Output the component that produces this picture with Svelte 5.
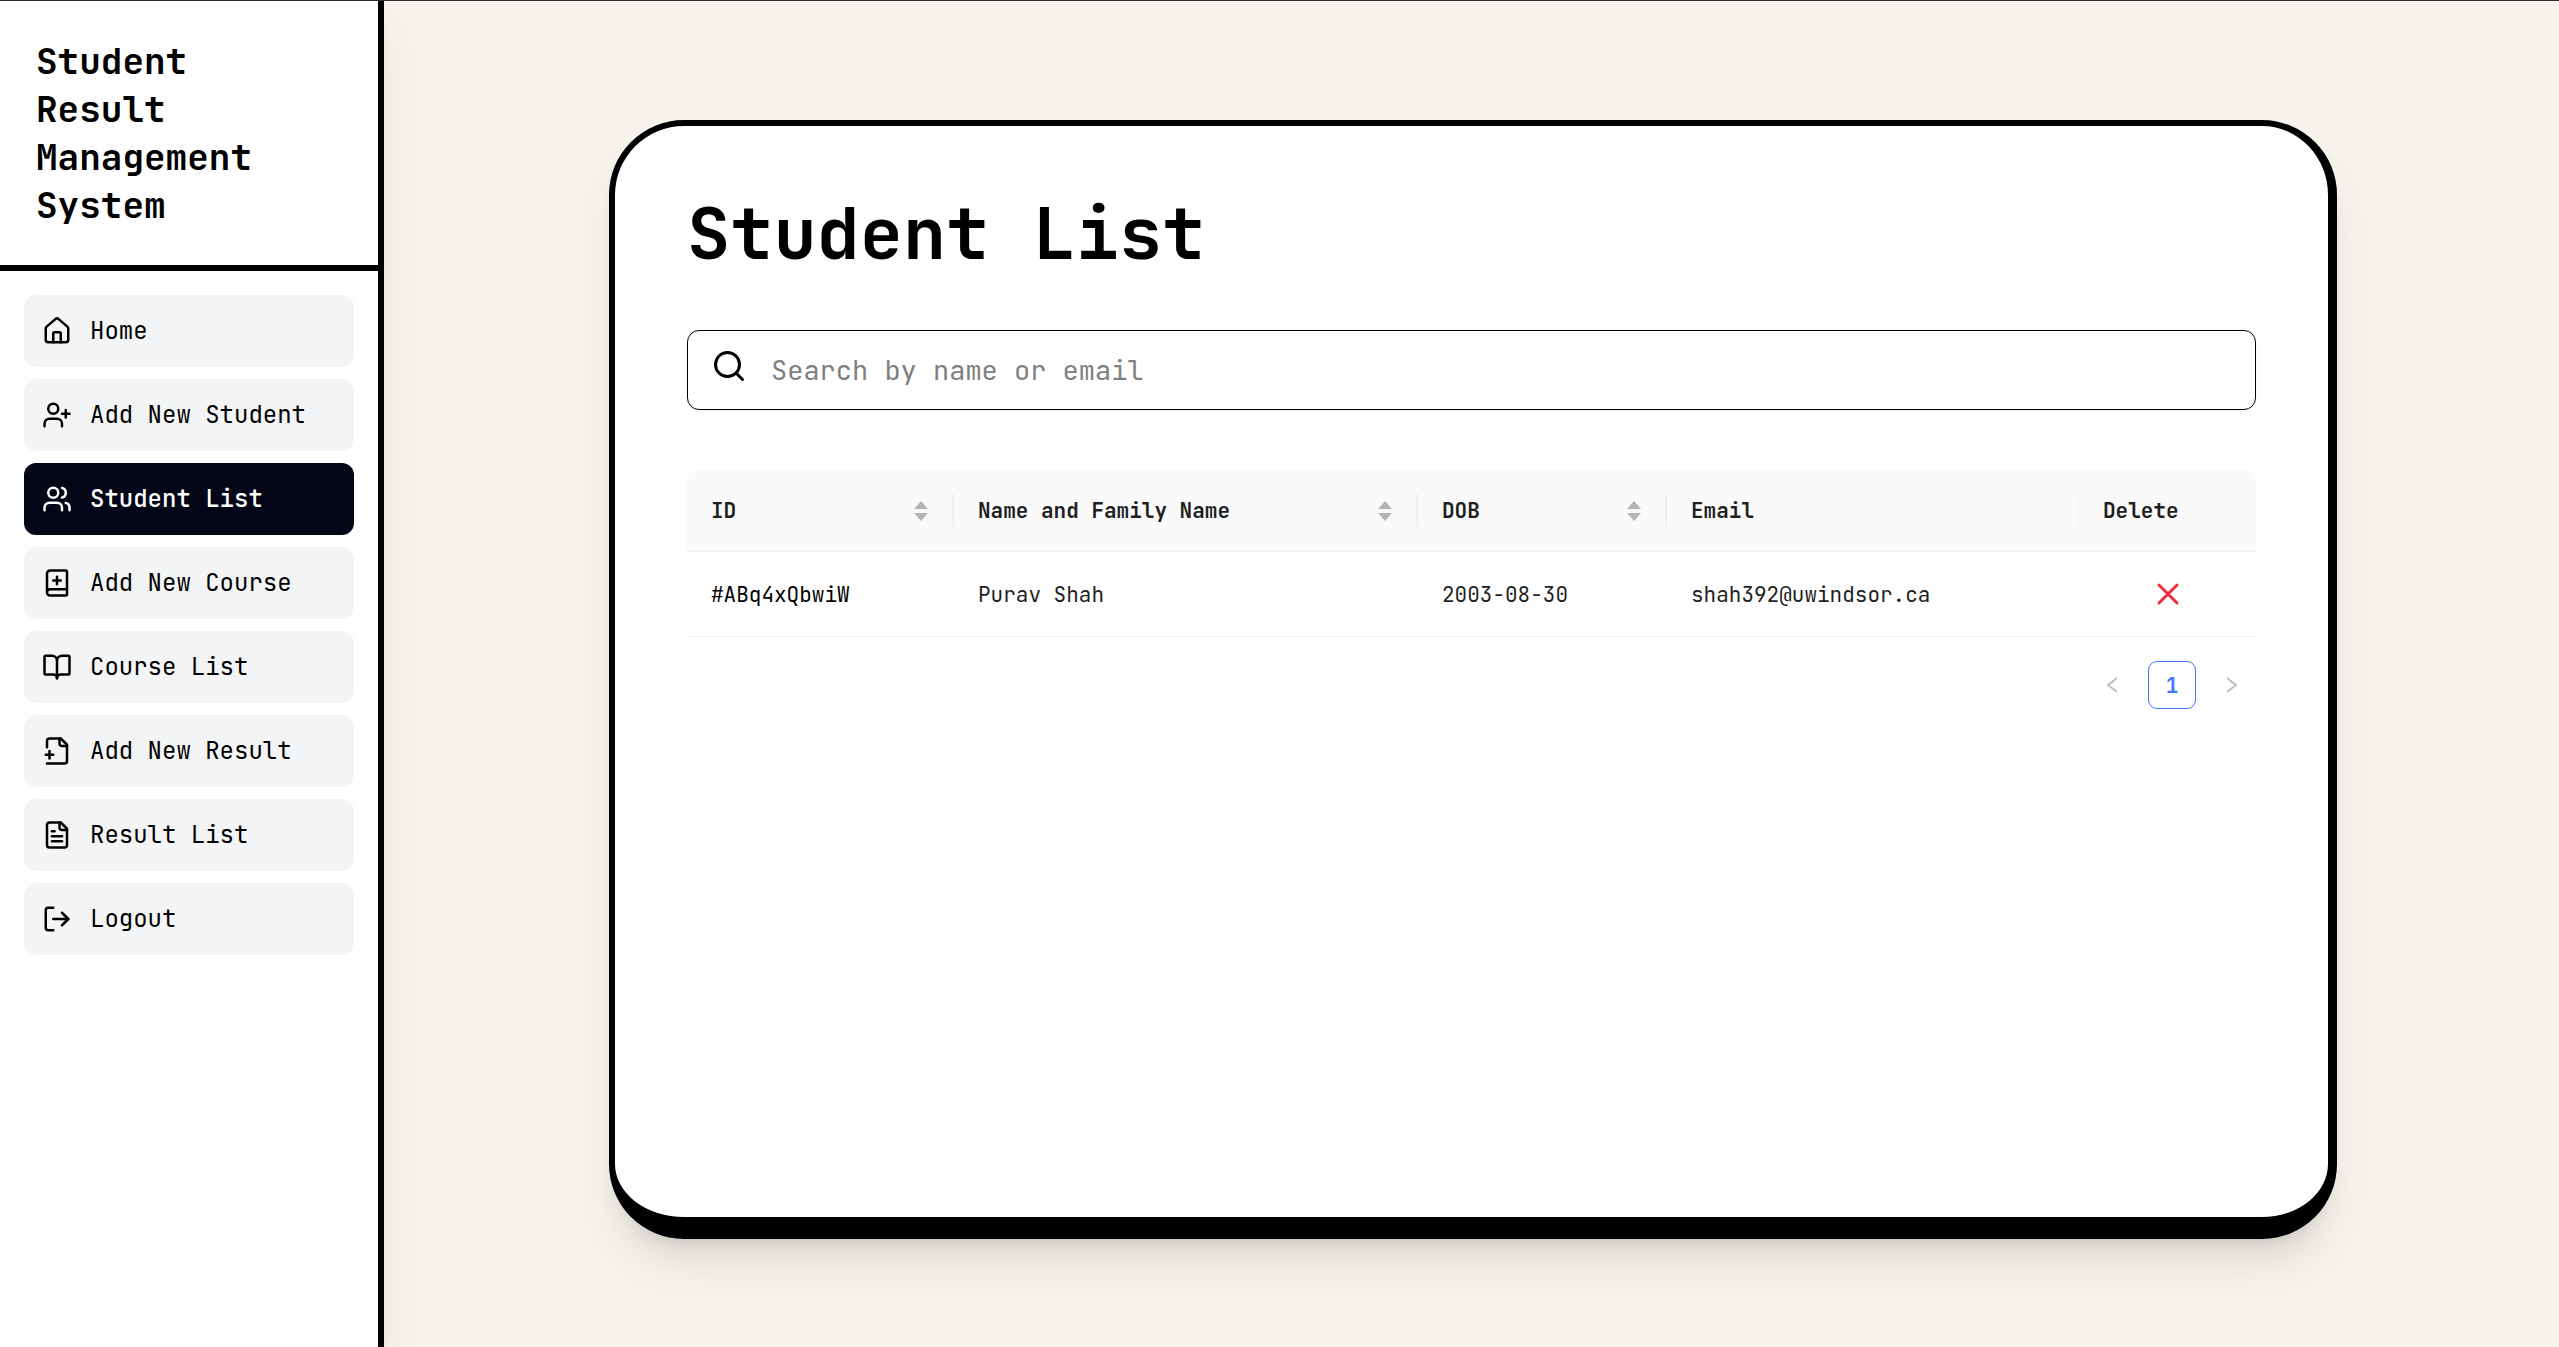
<script>
  const person = ['M16 21v-2a4 4 0 0 0-4-4H6a4 4 0 0 0-4 4v2', 'M9 3a4 4 0 1 1 0 8 4 4 0 0 1 0-8z'];
  const nav = [
    { label: 'Home', paths: ['M15 21v-7a1 1 0 0 0-1-1h-4a1 1 0 0 0-1 1v7', 'M3 10a2 2 0 0 1 .709-1.528l7-6a2 2 0 0 1 2.582 0l7 6A2 2 0 0 1 21 10v9a2 2 0 0 1-2 2H5a2 2 0 0 1-2-2z'] },
    { label: 'Add New Student', paths: [...person, 'M19 8v6', 'M22 11h-6'] },
    { label: 'Student List', active: true, paths: [...person, 'M22 21v-2a4 4 0 0 0-3-3.87', 'M16 3.13a4 4 0 0 1 0 7.75'] },
    { label: 'Add New Course', paths: ['M4 19.5v-15A2.5 2.5 0 0 1 6.5 2H19a1 1 0 0 1 1 1v18a1 1 0 0 1-1 1H6.5a1 1 0 0 1 0-5H20', 'M9 10h6', 'M12 7v6'] },
    { label: 'Course List', paths: ['M12 7v14', 'M3 18a1 1 0 0 1-1-1V4a1 1 0 0 1 1-1h5a4 4 0 0 1 4 4 4 4 0 0 1 4-4h5a1 1 0 0 1 1 1v13a1 1 0 0 1-1 1h-6a3 3 0 0 0-3 3 3 3 0 0 0-3-3z'] },
    { label: 'Add New Result', paths: ['M4 9V4a2 2 0 0 1 2-2h9l5 5v13a2 2 0 0 1-2 2H4', 'M14 2v4a2 2 0 0 0 2 2h4', 'M3 15h6', 'M6 12v6'] },
    { label: 'Result List', paths: ['M15 2H6a2 2 0 0 0-2 2v16a2 2 0 0 0 2 2h12a2 2 0 0 0 2-2V7Z', 'M14 2v4a2 2 0 0 0 2 2h4', 'M10 9H8', 'M16 13H8', 'M16 17H8'] },
    { label: 'Logout', paths: ['M9 21H5a2 2 0 0 1-2-2V5a2 2 0 0 1 2-2h4', 'M16 17l5-5-5-5', 'M21 12H9'] }
  ];

  const columns = [
    { title: 'ID', sortable: true, size: 'id' },
    { title: 'Name and Family Name', sortable: true, size: 'name' },
    { title: 'DOB', sortable: true, size: 'dob' },
    { title: 'Email', sortable: false, size: 'email' },
    { title: 'Delete', sortable: false, size: 'delete' }
  ];
  const students = [
    { id: '#ABq4xQbwiW', name: 'Purav Shah', dob: '2003-08-30', email: 'shah392@uwindsor.ca' }
  ];
</script>

<div class="layout">
  <aside class="sidebar">
    <h2 class="brand">Student Result Management System</h2>
    <nav class="menu">
      {#each nav as item}
        <a href="#top" class="link" class:active={item.active}>
          <svg class="icon" viewBox="0 0 24 24" aria-hidden="true">
            {#each item.paths as d}<path {d} />{/each}
          </svg>
          {item.label}
        </a>
      {/each}
    </nav>
  </aside>

  <main class="main">
    <section class="card">
      <h1 class="title">Student List</h1>

      <label class="search">
        <svg class="icon large" viewBox="0 0 24 24" aria-hidden="true">
          <circle cx="11" cy="11" r="8" /><path d="m21 21-4.300-4.300" />
        </svg>
        <input type="text" placeholder="Search by name or email" aria-label="Search by name or email" />
      </label>

      <table class="table">
        <thead>
          <tr>
            {#each columns as col}
              <th class={col.size} scope="col">
                <div class="head">
                  {col.title}
                  {#if col.sortable}
                    <button class="sort" aria-label={`Sort by ${col.title}`}>
                      <svg viewBox="0 0 14 20"><path d="M7 0l7 8H0zM7 20l7-8H0z" /></svg>
                    </button>
                  {/if}
                </div>
              </th>
            {/each}
          </tr>
        </thead>
        <tbody>
          {#each students as s}
            <tr>
              <td class="key">{s.id}</td>
              <td>{s.name}</td>
              <td>{s.dob}</td>
              <td>{s.email}</td>
              <td>
                <button class="remove" aria-label={`Delete ${s.name}`}>
                  <svg class="icon large" viewBox="0 0 24 24"><path d="M18 6 6 18M6 6l12 12" /></svg>
                </button>
              </td>
            </tr>
          {/each}
        </tbody>
      </table>

      <div class="pages">
        <button class="page" aria-label="Previous page" disabled>
          <svg viewBox="0 0 10 16"><path d="M10 1 1 8l9 7" /></svg>
        </button>
        <button class="page current">1</button>
        <button class="page" aria-label="Next page" disabled>
          <svg viewBox="0 0 10 16"><path d="m0 1 9 7-9 7" /></svg>
        </button>
      </div>
    </section>
  </main>
</div>

<style>
  :global(body) {
    margin: 0;
  }
  .layout,
  .layout * {
    box-sizing: border-box;
  }
  .layout {
    display: flex;
    min-height: 100vh;
    border-top: 1px solid #2d2c34;
    background: #f6f3ec;
    color: #000;
    font-family: 'JetBrains Mono', 'DejaVu Sans Mono', monospace;
  }
  button,
  input {
    font: inherit;
    color: inherit;
    border: 0;
    padding: 0;
    background: none;
  }
  .icon {
    width: 30px;
    height: 30px;
    flex: none;
    display: block;
    fill: none;
    stroke: currentColor;
    stroke-width: 2;
    stroke-linecap: round;
    stroke-linejoin: round;
  }
  .icon.large {
    width: 36px;
    height: 36px;
  }

  .sidebar {
    flex: none;
    width: 384px;
    background: #fff;
    border-right: 6px solid #000;
    box-shadow: 0 30px 38px -8px rgb(0 0 0 / 0.1), 0 12px 15px -9px rgb(0 0 0 / 0.1);
  }
  .brand {
    margin: 0;
    padding: 36px 72px 36px 36px;
    border-bottom: 6px solid #000;
    font-size: 36px;
    line-height: 48px;
    font-weight: 600;
  }
  .menu {
    display: flex;
    flex-direction: column;
    gap: 12px;
    padding: 24px;
  }
  .link {
    display: flex;
    align-items: center;
    gap: 18px;
    padding: 18px;
    border-radius: 12px;
    background: #f3f4f6;
    color: #000;
    font-size: 24px;
    line-height: 36px;
    text-decoration: none;
    white-space: nowrap;
  }
  .link.active {
    background: #020617;
    color: #fff;
    font-weight: 500;
  }

  .main {
    flex: 1;
    min-width: 0;
    display: flex;
    padding: 119px 222px 108px 225px;
  }
  .card {
    flex: 1;
    min-width: 0;
    padding: 72px;
    background: #fff;
    border: 6px solid #000;
    border-right-width: 9px;
    border-bottom-width: 22px;
    border-radius: 75px;
    box-shadow: 0 30px 38px -8px rgb(0 0 0 / 0.1), 0 12px 15px -9px rgb(0 0 0 / 0.1);
  }
  .title {
    margin: 0 0 60px;
    font-size: 72px;
    line-height: 72px;
    font-weight: 700;
  }
  .search {
    display: flex;
    gap: 24px;
    height: 80px;
    padding: 17px 23px;
    border: 1px solid #000;
    border-radius: 12px;
    box-shadow: 0 2px 3px rgb(0 0 0 / 0.05);
  }
  .search input {
    flex: 1;
    min-width: 0;
    height: 44px;
    font-size: 27px;
    outline: none;
  }
  .search input::placeholder {
    color: #808080;
    opacity: 1;
  }

  .table {
    width: 100%;
    margin-top: 60px;
    table-layout: fixed;
    border-collapse: separate;
    border-spacing: 0;
    color: #1f1f1f;
    font-size: 21px;
    line-height: 33px;
    text-align: left;
  }
  .id { width: 267px; }
  .name { width: 464px; }
  .dob { width: 249px; }
  .email { width: 412px; }
  .delete { width: 177px; }
  th {
    padding: 24px 0;
    background: #fafafa;
    border-bottom: 1px solid #f0f0f0;
    font-weight: 600;
    white-space: nowrap;
  }
  th:first-child {
    border-top-left-radius: 12px;
  }
  th:last-child {
    border-top-right-radius: 12px;
  }
  .head {
    display: flex;
    align-items: center;
    justify-content: space-between;
    padding: 0 24px;
    border-right: 2px solid #f0f0f0;
  }
  .email .head {
    border-right: 1px solid #f3f3f3;
  }
  th:last-child .head {
    border-right: 0;
  }
  .sort {
    width: 14px;
    height: 20px;
  }
  .sort svg {
    display: block;
    width: 14px;
    height: 20px;
    fill: #b3b3b3;
  }
  td {
    padding: 24px;
    border-bottom: 1px solid #f0f0f0;
  }
  .key {
    color: #000;
  }
  .remove {
    display: block;
    margin: 0 auto;
    color: #ee2c3c;
  }

  .pages {
    display: flex;
    justify-content: flex-end;
    gap: 12px;
    margin-top: 24px;
  }
  .page {
    display: grid;
    place-items: center;
    width: 48px;
    height: 48px;
    border-radius: 9px;
    font-size: 21px;
    color: #bfbfbf;
  }
  .page svg {
    width: 10px;
    height: 16px;
    fill: none;
    stroke: currentColor;
    stroke-width: 2;
  }
  .page.current {
    border: 1px solid #4676ff;
    color: #4676ff;
    font-weight: 600;
  }
</style>
